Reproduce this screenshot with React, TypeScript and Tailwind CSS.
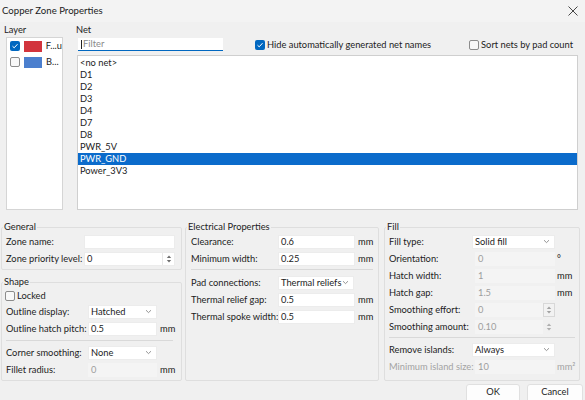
import type { ReactNode } from "react";

const nets = ["<no net>", "D1", "D2", "D3", "D4", "D7", "D8", "PWR_5V", "PWR_GND", "Power_3V3"];

function Check({ checked }: { checked?: boolean }) {
  return checked ? (
    <span className="w-[10px] h-[10px] shrink-0 rounded-[2px] bg-[#0067c0] flex items-center justify-center">
      <svg width="8" height="8" viewBox="0 0 8 8">
        <polyline points="1.5,4.2 3.2,5.8 6.5,2.2" fill="none" stroke="white" strokeWidth="1" />
      </svg>
    </span>
  ) : (
    <span className="w-[10px] h-[10px] shrink-0 rounded-[2px] border border-[#8c8c8c] bg-[#f8f8f8]" />
  );
}

function Chevron() {
  return (
    <svg width="7" height="5" viewBox="0 0 7 5" className="shrink-0">
      <polyline points="1,1.2 3.5,3.6 6,1.2" fill="none" stroke="#7a7a7a" strokeWidth="0.8" />
    </svg>
  );
}

function SpinArrows() {
  return (
    <svg width="6" height="10" viewBox="0 0 6 10">
      <polygon points="3,1.5 5.2,4 0.8,4" fill="#6e6e6e" />
      <polygon points="3,8.5 5.2,6 0.8,6" fill="#6e6e6e" />
    </svg>
  );
}

function TextBox({ value, w, spin }: { value?: string; w: string; spin?: boolean }) {
  return (
    <div className={`${w} h-[14px] shrink-0 bg-white border border-[#ececec] flex items-center pl-[2px]`}>
      <span className="flex-1">{value}</span>
      {spin && (
        <span className="w-[12px] h-full flex items-center justify-center border-l border-[#e8e8e8]">
          <SpinArrows />
        </span>
      )}
    </div>
  );
}

function Disabled({ value, w }: { value: string; w: string }) {
  return (
    <div className={`${w} h-[14px] shrink-0 bg-[#f4f4f4] flex items-center pl-[3px] text-[#9d9d9d]`}>
      {value}
    </div>
  );
}

function Combo({ value, w }: { value: string; w: string }) {
  return (
    <div className={`${w} h-[14px] shrink-0 bg-white border border-[#ececec] flex items-center justify-between pl-[2px] pr-[4px]`}>
      <span className="whitespace-nowrap">{value}</span>
      <Chevron />
    </div>
  );
}

function Row({ label, lw, children, gray }: { label: string; lw: string; children: ReactNode; gray?: boolean }) {
  return (
    <div className="flex items-center h-[17px]">
      <span className={`${lw} shrink-0 whitespace-nowrap ${gray ? "text-[#a3a3a3]" : ""}`}>{label}</span>
      {children}
    </div>
  );
}

function Unit({ text, gray, ml = "ml-[3px]" }: { text: string; gray?: boolean; ml?: string }) {
  return <span className={`${ml} ${gray ? "text-[#a3a3a3]" : ""}`}>{text}</span>;
}

function Group({ title, className, legendMl, children }: { title: string; className: string; legendMl: string; children: ReactNode }) {
  return (
    <fieldset className={`border border-[#dedede] rounded-[2px] ${className}`}>
      <legend className={`px-[1px] ${legendMl} leading-[12px]`}>{title}</legend>
      {children}
    </fieldset>
  );
}

export default function App() {
  return (
    <div className="w-[585px] h-[400px] overflow-hidden bg-[#f0f0f0] text-[9.3px] leading-[12px] text-[#1c1c1c] font-['Lato',sans-serif] flex flex-col">
      {/* Title bar */}
      <div className="h-[22px] shrink-0 bg-[#f3f3f3] flex items-center justify-between pl-[2px] pr-[7px]">
        <span className="text-[9.6px]">Copper Zone Properties</span>
        <svg width="10" height="10" viewBox="0 0 10 10">
          <path d="M0.5 0.5 L9.5 9.5 M9.5 0.5 L0.5 9.5" stroke="#333" strokeWidth="0.9" />
        </svg>
      </div>

      {/* Layer + Net */}
      <div className="h-[192px] shrink-0 flex">
        <div className="ml-[4px] w-[59px] flex flex-col">
          <div className="h-[15px] pt-[2px]">Layer</div>
          <div className="ml-[2px] w-[57px] h-[173px] bg-white border border-[#d5d5d5]">
            <div className="h-[16px] flex items-center pl-[3px] gap-[4px]">
              <Check checked />
              <span className="w-[18px] h-[11px] bg-[#d2343d]" />
              <span>F...u</span>
            </div>
            <div className="h-[16px] flex items-center pl-[3px] gap-[4px]">
              <Check />
              <span className="w-[18px] h-[11px] bg-[#4b7fce]" />
              <span>B...</span>
            </div>
          </div>
        </div>

        <div className="ml-[13px] w-[503px] flex flex-col">
          <div className="h-[15px] pt-[2px]">Net</div>
          <div className="flex items-center h-[15px]">
            <div className="ml-[2px] w-[145px] h-[13px] bg-white border-b border-[#0067c0] flex items-center pl-[3px] text-[#8a8a8a]">
              <span className="w-px h-[9px] bg-[#222] mr-px" />
              Filter
            </div>
            <div className="ml-[32px] flex items-center gap-[2px]">
              <Check checked />
              <span>Hide automatically generated net names</span>
            </div>
            <div className="ml-auto mr-[6px] flex items-center gap-[2px]">
              <Check />
              <span>Sort nets by pad count</span>
            </div>
          </div>
          <div className="mt-[3px] ml-[1px] w-[501px] h-[155px] bg-white border border-[#cfcfcf] pt-[1px]">
            {nets.map((n) => (
              <div
                key={n}
                className={`h-[12px] pl-[2px] flex items-center ${n === "PWR_GND" ? "bg-[#0b6bcb] text-white" : ""}`}
              >
                {n}
              </div>
            ))}
          </div>
        </div>
      </div>

      {/* Property groups */}
      <div className="flex pt-[7px] pl-[1px]">
        <div className="w-[181px] flex flex-col">
          <Group title="General" className="px-[4px] pb-[2px]" legendMl="-ml-[3px]">
            <Row label="Zone name:" lw="w-[78px]">
              <TextBox w="w-[91px]" />
            </Row>
            <Row label="Zone priority level:" lw="w-[78px]">
              <TextBox w="w-[91px]" value="0" spin />
            </Row>
          </Group>
          <Group title="Shape" className="mt-[6px] px-[4px] pb-[2px]" legendMl="-ml-[3px]">
            <div className="h-[15px] flex items-center gap-[2px] -ml-[1px]">
              <Check />
              <span>Locked</span>
            </div>
            <Row label="Outline display:" lw="w-[82px]">
              <Combo value="Hatched" w="w-[69px]" />
            </Row>
            <Row label="Outline hatch pitch:" lw="w-[82px]">
              <TextBox w="w-[69px]" value="0.5" />
              <Unit text="mm" />
            </Row>
            <div className="mt-[3px] h-px w-[167px] bg-[#d9d9d9]" />
            <div className="mt-[3px]">
              <Row label="Corner smoothing:" lw="w-[82px]">
                <Combo value="None" w="w-[69px]" />
              </Row>
              <Row label="Fillet radius:" lw="w-[82px]">
                <Disabled value="0" w="w-[69px]" />
                <Unit text="mm" />
              </Row>
            </div>
          </Group>
        </div>

        <Group title="Electrical Properties" className="ml-[3px] w-[194px] pl-[5px]" legendMl="-ml-[4px]">
          <Row label="Clearance:" lw="w-[87px]">
            <TextBox w="w-[77px]" value="0.6" />
            <Unit text="mm" />
          </Row>
          <Row label="Minimum width:" lw="w-[87px]">
            <TextBox w="w-[77px]" value="0.25" />
            <Unit text="mm" />
          </Row>
          <div className="mt-[2px] h-px w-[182px] bg-[#d9d9d9]" />
          <div className="mt-[4px]">
            <Row label="Pad connections:" lw="w-[87px]">
              <Combo value="Thermal reliefs" w="w-[76px]" />
            </Row>
            <Row label="Thermal relief gap:" lw="w-[87px]">
              <TextBox w="w-[77px]" value="0.5" />
              <Unit text="mm" />
            </Row>
            <Row label="Thermal spoke width:" lw="w-[87px]">
              <TextBox w="w-[77px]" value="0.5" />
              <Unit text="mm" />
            </Row>
          </div>
        </Group>

        <Group title="Fill" className="ml-[5px] w-[196px] pl-[4px]" legendMl="-ml-[3px]">
          <Row label="Fill type:" lw="w-[83px]">
            <Combo value="Solid fill" w="w-[83px]" />
          </Row>
          <Row label="Orientation:" lw="w-[86px]">
            <Disabled value="0" w="w-[80px]" />
            <Unit text="°" ml="ml-[2px]" />
          </Row>
          <Row label="Hatch width:" lw="w-[86px]">
            <Disabled value="1" w="w-[80px]" />
            <Unit text="mm" ml="ml-[2px]" />
          </Row>
          <Row label="Hatch gap:" lw="w-[86px]">
            <Disabled value="1.5" w="w-[80px]" />
            <Unit text="mm" ml="ml-[2px]" />
          </Row>
          <Row label="Smoothing effort:" lw="w-[86px]">
            <Disabled value="0" w="w-[68px]" />
            <span className="w-[12px] h-[14px] border border-[#c9c9c9] bg-[#f4f4f4] flex items-center justify-center opacity-60">
              <SpinArrows />
            </span>
          </Row>
          <Row label="Smoothing amount:" lw="w-[86px]">
            <Disabled value="0.10" w="w-[68px]" />
            <span className="w-[12px] h-[14px] flex items-center justify-center opacity-50">
              <SpinArrows />
            </span>
          </Row>
          <div className="mt-[2px] h-px w-[186px] bg-[#d9d9d9]" />
          <div className="mt-[3px]">
            <Row label="Remove islands:" lw="w-[83px]">
              <Combo value="Always" w="w-[83px]" />
            </Row>
            <Row label="Minimum island size:" lw="w-[86px]" gray>
              <Disabled value="10" w="w-[80px]" />
              <Unit text="mm²" gray ml="ml-[2px]" />
            </Row>
          </div>
        </Group>
      </div>

      {/* Buttons */}
      <div className="mt-[3px] flex justify-end gap-[7px] pr-[2px]">
        <button className="w-[54px] h-[20px] bg-[#fdfdfd] border border-[#e0e0e0] rounded-[3px] pb-[4px]">OK</button>
        <button className="w-[56px] h-[20px] bg-[#fdfdfd] border border-[#e0e0e0] rounded-[3px] pb-[4px]">Cancel</button>
      </div>
    </div>
  );
}
